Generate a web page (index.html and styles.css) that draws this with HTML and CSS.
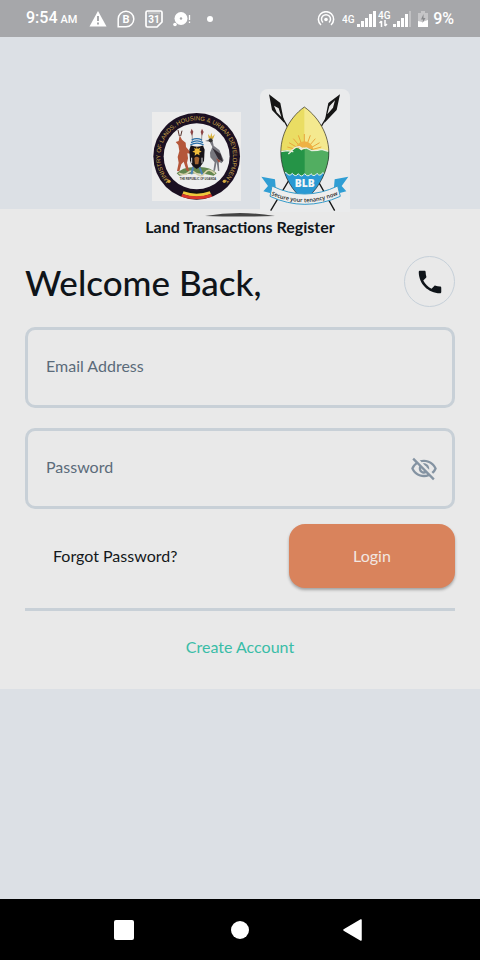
FILE: index.html
```
<!DOCTYPE html>
<html lang="en">
<head>
<meta charset="utf-8">
<meta name="viewport" content="width=device-width,initial-scale=1">
<title>Land Transactions Register</title>
<link rel="stylesheet" href="styles.css">
</head>
<body>

<header class="status-bar">
  <div class="status-left">
    <span class="clock">9:54 <small>AM</small></span>
    <svg width="18" height="18" viewBox="0 0 18 18"><path d="M9 1 L17.5 16.5 H.5Z" fill="#fff"/><path d="M9 6v5M9 12.500v2" stroke="#a6a7aa" stroke-width="2"/></svg>
    <svg width="18" height="18" viewBox="0 0 18 18"><path d="M1.200 16.800V9a7.800 7.800 0 1 1 7.800 7.800Z" fill="none" stroke="#fff" stroke-width="1.500"/><text x="9" y="13" class="icon-text" font-size="11" text-anchor="middle">B</text></svg>
    <svg width="18" height="18" viewBox="0 0 18 18"><path d="M2.500 1h13a1.500 1.500 0 0 1 1.500 1.500V12l-5 5H2.500A1.500 1.500 0 0 1 1 15.500v-13A1.500 1.500 0 0 1 2.500 1Z" fill="none" stroke="#fff" stroke-width="1.700"/><path d="M3 3h12" stroke="#fff" stroke-opacity=".5"/><text x="9" y="13" class="icon-text" font-size="10" text-anchor="middle">31</text></svg>
    <svg width="18" height="18" viewBox="0 0 18 18"><circle cx="8" cy="8.500" r="6.500" fill="#fff"/><circle cx="2" cy="14.500" r="1.800" fill="#fff"/><circle cx="8" cy="8.500" r="1.200" fill="#a6a7aa"/><path d="M16.500 5v5M16.500 11.500v1.500" stroke="#fff" stroke-width="1.300"/></svg>
    <span class="more-dot"></span>
  </div>
  <div class="status-right">
    <svg width="18" height="16" viewBox="0 0 18 16"><g fill="none" stroke="#fff" stroke-width="1.500"><path d="M4 14a7.600 7.600 0 1 1 10 0"/><path d="M6 11.500a4.500 4.500 0 1 1 6 0"/></g><circle cx="9" cy="8.500" r="1.800" fill="#fff"/></svg>
    <svg class="signal" width="34" height="18" viewBox="0 0 34 18"><text x="0" y="13" class="net-text" font-size="10">4G</text><path d="M15 14h3v3h-3zM19 11h3v6h-3zM23 8h3v9h-3zM27 4h3v13h-3zM31 1h3v16h-3z" fill="#fff"/></svg>
    <svg width="34" height="18" viewBox="0 0 34 18"><text x="0" y="9" class="net-text" font-size="10">4G</text><path d="M3.500 17v-6M1.500 13l2-2M7 10v6M9 14l-2 2" stroke="#fff" stroke-width="1.500"/><path d="M15 14h3v3h-3zM19 11h3v6h-3zM23 8h3v9h-3zM27 4h3v13h-3z" fill="#fff"/><path d="M31 1h2v16h-2z" fill="#fff" opacity=".3"/></svg>
    <svg class="battery" width="10" height="16" viewBox="0 0 10 16"><path d="M3 0h4v2h3v14H0V2h3z" fill="#fff" opacity=".35"/><path d="M0 10l4 1 6-2v7H0z" fill="#fff"/><path d="M5.500 3 3 8.500h2L4.500 12 7.500 7H5.500z" fill="#88898c"/></svg>
    <span class="charge">9%</span>
  </div>
</header>

<main class="page">
  <div class="logos">
    <svg class="seal" viewBox="0 0 267 267" role="img" aria-label="Ministry of Lands, Housing and Urban Development">
      <defs><path id="ring" d="M54 208a109 109 0 1 1 160 0"/></defs>
      <rect width="267" height="267" fill="#ececec"/>
      <circle cx="134" cy="133" r="130" fill="#1b1022"/>
      <circle cx="134" cy="133" r="99" fill="#eee"/>
      <text class="seal-text" font-size="18"><textPath href="#ring" startOffset="50%" text-anchor="middle">MINISTRY OF LANDS, HOUSING &amp; URBAN DEVELOPMENT</textPath></text>
      <circle cx="51" cy="208" r="5" fill="#d9ab3f"/><circle cx="217" cy="208" r="5" fill="#d9ab3f"/>
      <!-- flag ribbon -->
      <path d="M95 236q39 14 78 0" fill="none" stroke="#111" stroke-width="8"/>
      <path d="M93 242q41 15 82 0" fill="none" stroke="#eec93c" stroke-width="9"/>
      <path d="M89 250q45 15 90 0" fill="none" stroke="#d9372c" stroke-width="9"/>
      <!-- mound -->
      <path d="M74 184q22-22 55-18 40-6 65 18l-9 7q-52-15-103 0z" fill="#63864e"/>
      <path d="M80 184q18 8 28-2t25 3 26-3 30 3" fill="none" stroke="#d8d2ae" stroke-width="5"/>
      <path d="M124 164l-6 23M142 164l9 23" stroke="#4b83b8" stroke-width="6"/>
      <!-- antelope -->
      <path d="M83 70l7 13 11 9 1 13 11 13 10-3-8 10-9-1 2 15-3 13 6 25-7-1-9-27-7 8-6 21-7-1 5-25-3-17 5-18-3-18-8-9 9-3z" fill="#b4563a"/>
      <path d="M82 72l-4-18M86 72l4-16" stroke="#54302a" stroke-width="3"/>
      <!-- crested crane -->
      <path d="M173 82l-14 5 14 2 8 16-7 17 1 14 13 15-4 25h5l5-27 4 28h4l-2-30 8 7 7-9-13-31-17-13-3-14z" fill="#77777e"/>
      <path d="M181 108l25 18 7 23-14-8z" fill="#302a32"/>
      <path d="M192 139l13 7-4 6z" fill="#a54833"/>
      <path d="M170 79l-2-13 7 8 3-12 3 12 8-8-6 15z" fill="#d6ae35"/>
      <circle cx="176" cy="85" r="6" fill="#333"/>
      <!-- shield and spears -->
      <path d="M120 57l4 112M150 57l-5 112" stroke="#6e6768" stroke-width="2"/>
      <path d="M119 50l5 9-4 12-5-10zM150 50l5 10-5 11-4-11z" fill="#8e4648"/>
      <path d="M117 98q17-12 35 0l6 15-2 33q-7 17-22 25-15-8-20-25l-2-33z" fill="#171217"/>
      <path d="M116 90q19-14 38 0l1 10q-20 8-39 0z" fill="#eee"/>
      <path d="M117 92q18-11 36 0M115 99q20-11 40 0M119 84q15-8 31 0" fill="none" stroke="#286da7" stroke-width="4"/>
      <path d="M134 103l3 8 8-4-3 8 7 4-8 3 2 8-8-4-7 5 1-9-8-3 8-4-3-8 7 4z" fill="#f0bd3a"/>
      <path d="M127 138q7-7 15 0l-3 19h-10z" fill="#a3632f"/>
      <path d="M119 137v17M150 137v17" stroke="#ddd" stroke-width="3"/>
      <text x="138" y="204" class="seal-caption" font-size="8" text-anchor="middle">THE REPUBLIC OF UGANDA</text>
    </svg>

    <svg class="blb" viewBox="0 0 270 369" role="img" aria-label="Buganda Land Board">
      <defs>
        <clipPath id="shield"><path d="M133 54C85 88 55 150 64 212c7 51 34 97 69 121 35-24 63-70 72-121 9-62-24-124-72-158z"/></clipPath>
        <path id="banner" d="M34 318q98 43 199 0"/>
      </defs>
      <path d="M0 369V24A24 24 0 0 1 24 0h222a24 24 0 0 1 24 24v345z" fill="#eaebec"/>
      <g stroke="#171717" stroke-width="4"><path d="M44 45L224 365M224 45L32 365"/></g>
      <path d="M27 16l34 26 12 60-37-39zM240 16l-35 26-12 60 37-39z" fill="#151515"/>
      <path d="M42 50l14 8 8 26-14-14zM225 34l-17 18-6 24 17-20z" fill="#e8e8e8"/>
      <g clip-path="url(#shield)">
        <path d="M55 50h160v140H55z" fill="#eadd63"/>
        <path d="M133 50h82v140h-82z" fill="#f4e98f"/>
        <g stroke="#e8a63c" stroke-width="3"><path d="M133 188V135M133 188l-18-49M133 188l18-49M133 188l-33-39M133 188l33-39M133 188l-46-27M133 188l46-27M133 188l-51-14M133 188l51-14"/></g>
        <circle cx="133" cy="184" r="27" fill="#efb143"/>
        <path d="M55 188l22-4 14 3 18-11 17 6 18-4 20 7 20-3 31 8v80H55z" fill="#259447"/>
        <path d="M134 180l10-2 20 7 20-3 31 8v80h-81z" fill="#52ae61"/>
        <path d="M62 188l20-3 10 2 15-12 11-2 9 6 12-2 16 8 18-1 12-3 20 6M85 195l10-9 5 3M118 177l6 5 7-6" fill="none" stroke="#e9efdf" stroke-width="4"/>
        <path d="M55 250q12 13 23 0 9 15 19 3 9 13 18 1 9 14 19 0 10 13 19 0 9 12 18-1 9 12 17-2 10 9 27-1v90H55z" fill="#2a99d3" stroke="#e9f2f2" stroke-width="3"/>
      </g>
      <path d="M133 54C85 88 55 150 64 212c7 51 34 97 69 121 35-24 63-70 72-121 9-62-24-124-72-158z" fill="none" stroke="#242424" stroke-width="2"/>
      <text x="134" y="295" class="blb-text" font-size="31" text-anchor="middle">BLB</text>
      <path d="M4 263l41 8 4 46-39-10 14-16zM265 263l-41 8-4 46 39-10-14-16z" fill="#309ed4"/>
      <path d="M36 291q98 48 197 0l8 31q-107 48-211 0z" fill="#eee" stroke="#369bc9" stroke-width="3"/>
      <text class="banner-text" font-size="17"><textPath href="#banner" startOffset="50%" text-anchor="middle">Secure your tenancy now</textPath></text>
    </svg>
  </div>

  <section class="card">
    <div class="brand">
      <svg class="arc" viewBox="0 0 70 4"><path d="M0 3Q35-3 70 3Q35 4 0 3Z" fill="#444"/></svg>
      <p class="app-name">Land Transactions Register</p>
    </div>
    <div class="heading">
      <h1>Welcome Back,</h1>
      <button class="call-btn" type="button" aria-label="Call support">
        <svg width="30" height="30" viewBox="0 0 24 24"><path d="M6.620 10.790c1.440 2.830 3.760 5.140 6.590 6.590l2.200-2.200c.27-.27.67-.36 1.020-.24 1.120.37 2.330.57 3.570.57.55 0 1 .45 1 1V20c0 .55-.45 1-1 1-9.390 0-17-7.610-17-17 0-.55.45-1 1-1h3.500c.55 0 1 .45 1 1 0 1.250.2 2.450.57 3.570.11.35.03.74-.25 1.020z" fill="#0f1419"/></svg>
      </button>
    </div>
    <form class="login">
      <div class="field">
        <input type="email" placeholder="Email Address" aria-label="Email Address">
      </div>
      <div class="field">
        <input type="password" placeholder="Password" aria-label="Password">
        <button class="eye-btn" type="button" aria-label="Show password">
          <svg width="28" height="28" viewBox="0 0 24 24"><path d="M12 6c3.790 0 7.170 2.130 8.820 5.500-.59 1.220-1.420 2.270-2.410 3.120l1.410 1.410c1.390-1.230 2.490-2.770 3.180-4.530C21.270 7.110 17 4 12 4c-1.270 0-2.490.2-3.640.57l1.650 1.650C10.660 6.090 11.320 6 12 6zm-1.070 1.140L13 9.210c.57.25 1.030.71 1.280 1.280l2.070 2.070c.08-.34.14-.7.14-1.070C16.500 9.010 14.480 7 12 7c-.37 0-.72.05-1.070.14zM2.010 3.870l2.680 2.680C3.060 7.830 1.770 9.530 1 11.500 2.730 15.890 7 19 12 19c1.520 0 2.980-.29 4.320-.82l3.420 3.420 1.410-1.410L3.420 2.450 2.010 3.870zm7.500 7.500 2.610 2.610c-.04.01-.08.02-.12.02-1.380 0-2.500-1.120-2.500-2.500 0-.05.01-.08.01-.13zm-3.400-3.400 1.750 1.750c-.23.55-.36 1.150-.36 1.780 0 2.480 2.020 4.500 4.500 4.500.63 0 1.230-.13 1.770-.36l.98.98c-.88.24-1.800.38-2.750.38-3.790 0-7.170-2.130-8.820-5.500.7-1.430 1.720-2.610 2.930-3.530z" fill="#8493a2"/></svg>
        </button>
      </div>
      <div class="actions">
        <a href="#" class="forgot">Forgot Password?</a>
        <button class="login-btn" type="submit">Login</button>
      </div>
    </form>
    <hr class="divider">
    <a href="#" class="create">Create Account</a>
  </section>
</main>

<nav class="nav-bar">
  <button type="button" aria-label="Recent apps"><svg width="20" height="20" viewBox="0 0 20 20"><rect width="20" height="20" rx="2" fill="#fff"/></svg></button>
  <button type="button" aria-label="Home"><svg width="20" height="20" viewBox="0 0 20 20"><circle cx="10" cy="10" r="9" fill="#fff"/></svg></button>
  <button type="button" aria-label="Back"><svg width="26" height="22" viewBox="0 0 26 22"><path d="M18 1v20L1 11z" fill="#fff" stroke="#fff" stroke-width="1.500" stroke-linejoin="round"/></svg></button>
</nav>

</body>
</html>
```
FILE: styles.css
```
*{box-sizing:border-box;}
body{margin:0;min-height:100vh;display:flex;flex-direction:column;background:#dce0e5;color:#0f1419;font-family:Lato,"Open Sans",sans-serif;font-size:16px;line-height:20px;}
button{border:none;background:none;padding:0;font:inherit;cursor:pointer;}
a{text-decoration:none;}
svg{display:block;flex:none;}

.status-bar{height:37px;padding:1px 26px 0;display:flex;align-items:center;justify-content:space-between;background:#a6a7aa;color:#fff;font-family:Roboto,sans-serif;font-weight:500;}
.status-left{display:flex;align-items:center;gap:10px;}
.status-right{display:flex;align-items:center;gap:5px;}
.clock{margin-right:2px;}
.clock small{font-size:11px;margin-left:-1px;}
.more-dot{width:6px;height:6px;margin-left:6px;border-radius:50%;background:#fff;}
.signal{margin-left:2px;margin-right:-3px;}
.battery{margin-left:1px;}
.icon-text{fill:#fff;font-family:Roboto,sans-serif;font-weight:700;}
.net-text{fill:#fff;font-family:Roboto,sans-serif;font-weight:500;}

.page{flex:1;}
.logos{height:172px;padding-top:52px;display:flex;justify-content:center;align-items:flex-start;gap:19px;padding-left:22px;}
.seal{width:89px;height:89px;margin-top:23px;}
.blb{position:relative;width:90px;height:123px;}
.seal-text{fill:#cfa94a;font-family:"Liberation Sans",sans-serif;}
.seal-caption{fill:#333;font-family:"Liberation Sans",sans-serif;font-weight:700;}
.blb-text{fill:#f3f6f6;font-family:"Open Sans",sans-serif;font-weight:800;}
.banner-text{fill:#222;font-family:"Open Sans",sans-serif;font-weight:600;}

.card{background:#e9e9e9;padding:0 25px 32px;}
.brand{height:47px;padding-top:4px;display:flex;flex-direction:column;align-items:center;}
.arc{width:70px;height:4px;}
.app-name{margin:0;font-size:16px;font-weight:700;line-height:20px;}
.heading{display:flex;align-items:center;justify-content:space-between;}
h1{margin:0;font-size:35px;line-height:44px;font-weight:500;}
.call-btn{width:51px;height:51px;display:flex;align-items:center;justify-content:center;border:1px solid #c6d0d9;border-radius:50%;}

.login{margin-top:20px;}
.field{height:81px;margin-bottom:20px;padding:0 14px 0 18px;display:flex;align-items:center;border:3px solid #c8d0d7;border-radius:10px;}
.field input{flex:1;min-width:0;height:100%;padding:0 0 4px;border:none;outline:none;background:none;font:inherit;color:#0f1419;}
.field input::placeholder{color:#5b6b7a;opacity:1;}
.actions{margin-top:-5px;display:flex;align-items:center;justify-content:space-between;}
.forgot{padding-left:28px;color:#14181b;}
.login-btn{width:166px;height:64px;border-radius:16px;background:#d9835c;color:#f2e7e2;box-shadow:0 2px 3px rgba(0,0,0,.3);}
.divider{height:3px;margin:20px 0 26px;border:none;background:#c8d0d7;}
.create{display:block;text-align:center;color:#39bda7;}

.nav-bar{height:61px;display:flex;align-items:center;justify-content:center;gap:96px;background:#000;}
.nav-bar button{width:20px;display:flex;justify-content:center;}
```
